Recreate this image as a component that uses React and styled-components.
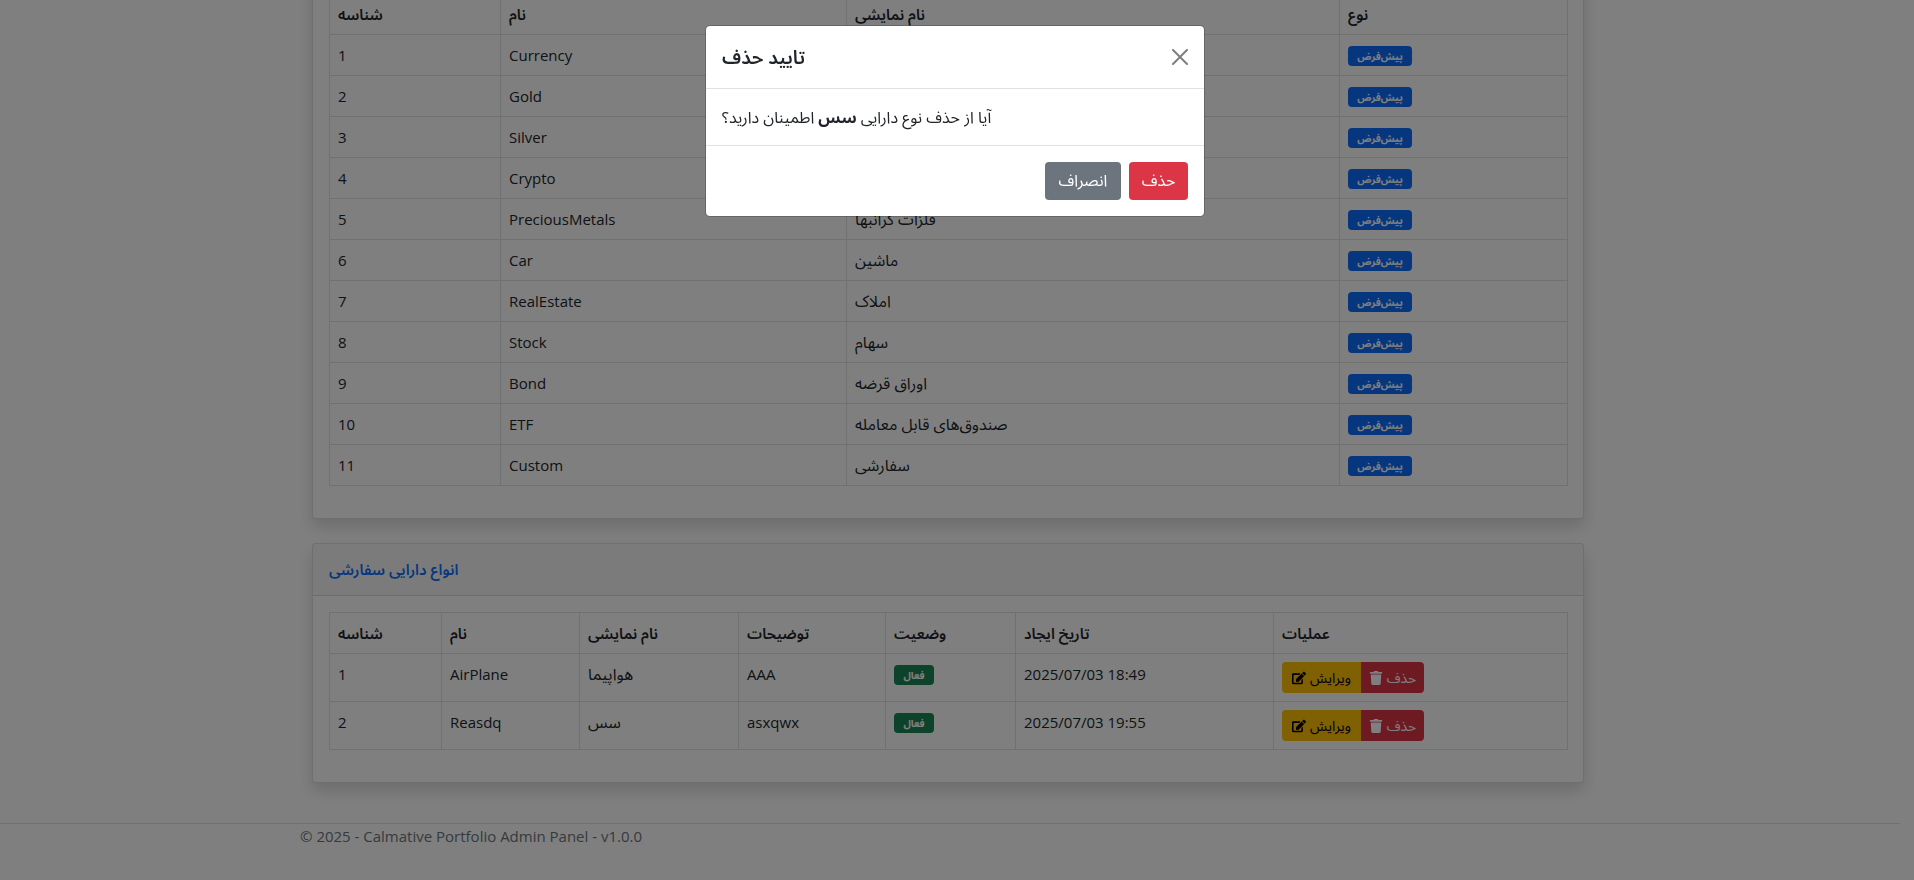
import React from "react";
import styled, { createGlobalStyle } from "styled-components";
import { FaEdit, FaTrash } from "react-icons/fa";

const GlobalStyle = createGlobalStyle`
  *, *::before, *::after { box-sizing: border-box; }
  body {
    margin: 0;
    overflow: hidden;
    background: #fff;
    color: #212529;
    font-family: "Open Sans", "Noto Sans Arabic", "DejaVu Sans", sans-serif;
    font-size: 15px;
    line-height: 24px;
  }
`;

const Fa = styled.span.attrs({ lang: "fa" })`
  font-size: ${({ $size }) => $size || 16}px;
  line-height: 16px;
`;

const Main = styled.main`
  margin-top: -24px;
  padding-right: 18px;
`;

const Container = styled.div`
  max-width: 1320px;
  margin: 0 auto;
  padding: 0 ${({ $gutter }) => $gutter}px;
`;

const Card = styled.section`
  margin-bottom: 24px;
  border: 1px solid rgba(0, 0, 0, 0.125);
  border-radius: 4px;
  background: #fff;
  box-shadow: 0 8px 16px rgba(0, 0, 0, 0.15);
`;

const CardHeader = styled.header`
  padding: 16px;
  border-bottom: 1px solid rgba(0, 0, 0, 0.125);
  background: rgba(0, 0, 0, 0.03);
`;

const CardTitle = styled.h6`
  margin: 0;
  color: #0d6efd;
  font-size: 15px;
  font-weight: 600;
  line-height: 19px;
`;

const CardBody = styled.div`
  padding: 16px 16px 32px;
`;

const Table = styled.table`
  width: 100%;
  table-layout: fixed;
  border-collapse: collapse;

  th, td {
    height: ${({ $row }) => $row}px;
    padding: 8px;
    border: 1px solid #dee2e6;
    text-align: left;
    vertical-align: top;
    line-height: 24px;
  }
  thead th { height: 41px; font-weight: 600; }
`;

const Col = styled.col`
  width: ${({ $w }) => $w}px;
`;

const Badge = styled.span`
  display: flex;
  align-items: center;
  justify-content: center;
  width: fit-content;
  min-width: ${({ $wide }) => ($wide ? 64 : 40)}px;
  height: 20px;
  margin-top: 3px;
  border-radius: 4px;
  background: ${({ $wide }) => ($wide ? "#0d6efd" : "#198754")};
  color: #fff;
  font-size: 10px;
  font-weight: 700;
  line-height: 12px;
`;

const ButtonGroup = styled.div`
  display: flex;
`;

const SmallButton = styled.button`
  display: flex;
  align-items: center;
  justify-content: center;
  gap: 4px;
  width: ${({ $danger }) => ($danger ? 63 : 79)}px;
  height: 31px;
  padding: 0;
  border: 0;
  border-radius: ${({ $danger }) => ($danger ? "0 4px 4px 0" : "4px 0 0 4px")};
  background: ${({ $danger }) => ($danger ? "#dc3545" : "#ffc107")};
  color: ${({ $danger }) => ($danger ? "#fff" : "#000")};
  font-family: inherit;
  font-size: 14px;
  line-height: 21px;
  white-space: nowrap;
`;

const Footer = styled.footer`
  margin: 40px 14px 0 0;
  padding: 0 4px 32px 0;
  border-top: 1px solid #dee2e6;
  color: #6c757d;
`;

const Backdrop = styled.div`
  position: fixed;
  inset: 0;
  padding: 25px 4px 0 0;
  background: rgba(0, 0, 0, 0.5);
`;

const Dialog = styled.div`
  max-width: 500px;
  margin: 0 auto;
  border: 1px solid rgba(0, 0, 0, 0.2);
  border-radius: 5px;
  background: #fff;
  background-clip: padding-box;
`;

const DialogHeader = styled.header`
  display: flex;
  align-items: center;
  justify-content: space-between;
  padding: 16px;
  border-bottom: 1px solid #dee2e6;
`;

const DialogTitle = styled.h5`
  margin: 0;
  font-size: 19px;
  font-weight: 600;
  line-height: 30px;
`;

const CloseButton = styled.button`
  display: flex;
  padding: 0;
  border: 0;
  background: none;
  color: #000;
  opacity: 0.5;
`;

const DialogBody = styled.div`
  padding: 16px;
`;

const Message = styled.p`
  margin: 0;
`;

const DialogFooter = styled.footer`
  display: flex;
  justify-content: flex-end;
  gap: 8px;
  padding: 16px;
  border-top: 1px solid #dee2e6;
`;

const DialogButton = styled.button`
  height: 38px;
  min-width: ${({ $danger }) => ($danger ? 59 : 76)}px;
  padding: 0 12px;
  border: 0;
  border-radius: 4px;
  background: ${({ $danger }) => ($danger ? "#dc3545" : "#6c757d")};
  color: #fff;
  font-family: inherit;
  font-size: 16px;
`;

const defaultTypes = [
  ["Currency", "ارز"],
  ["Gold", "طلا"],
  ["Silver", "نقره"],
  ["Crypto", "ارز دیجیتال"],
  ["PreciousMetals", "فلزات گرانبها"],
  ["Car", "ماشین"],
  ["RealEstate", "املاک"],
  ["Stock", "سهام"],
  ["Bond", "اوراق قرضه"],
  ["ETF", "صندوق‌های قابل معامله"],
  ["Custom", "سفارشی"],
];

const customTypes = [
  ["AirPlane", "هواپیما", "AAA", "2025/07/03 18:49"],
  ["Reasdq", "سس", "asxqwx", "2025/07/03 19:55"],
];

function TableHead({ labels }) {
  return (
    <thead>
      <tr>
        {labels.map((label) => (
          <th key={label} scope="col"><Fa $size={15}>{label}</Fa></th>
        ))}
      </tr>
    </thead>
  );
}

function Columns({ widths }) {
  return (
    <colgroup>
      {widths.map((w, i) => <Col key={i} $w={w} />)}
    </colgroup>
  );
}

export default function App() {
  return (
    <>
      <GlobalStyle />
      <Main>
        <Container $gutter={24}>
          <Card>
            <CardBody>
              <Table $row={41}>
                <Columns widths={[171, 346, 493, 228]} />
                <TableHead labels={["شناسه", "نام", "نام نمایشی", "نوع"]} />
                <tbody>
                  {defaultTypes.map(([name, title], i) => (
                    <tr key={name}>
                      <td>{i + 1}</td>
                      <td>{name}</td>
                      <td><Fa>{title}</Fa></td>
                      <td><Badge $wide>پیش‌فرض</Badge></td>
                    </tr>
                  ))}
                </tbody>
              </Table>
            </CardBody>
          </Card>
          <Card>
            <CardHeader>
              <CardTitle><Fa $size={15}>انواع دارایی سفارشی</Fa></CardTitle>
            </CardHeader>
            <CardBody>
              <Table $row={48}>
                <Columns widths={[112, 138, 159, 147, 130, 258, 294]} />
                <TableHead
                  labels={["شناسه", "نام", "نام نمایشی", "توضیحات", "وضعیت", "تاریخ ایجاد", "عملیات"]}
                />
                <tbody>
                  {customTypes.map(([name, title, note, date], i) => (
                    <tr key={name}>
                      <td>{i + 1}</td>
                      <td>{name}</td>
                      <td><Fa>{title}</Fa></td>
                      <td>{note}</td>
                      <td><Badge>فعال</Badge></td>
                      <td>{date}</td>
                      <td>
                        <ButtonGroup>
                          <SmallButton type="button"><FaEdit /><Fa $size={14}>ویرایش</Fa></SmallButton>
                          <SmallButton type="button" $danger><FaTrash /><Fa $size={14}>حذف</Fa></SmallButton>
                        </ButtonGroup>
                      </td>
                    </tr>
                  ))}
                </tbody>
              </Table>
            </CardBody>
          </Card>
        </Container>
      </Main>
      <Footer>
        <Container $gutter={12}>© 2025 - Calmative Portfolio Admin Panel - v1.0.0</Container>
      </Footer>
      <Backdrop>
        <Dialog role="dialog" aria-modal="true" aria-labelledby="dialog-title">
          <DialogHeader>
            <DialogTitle id="dialog-title">تایید حذف</DialogTitle>
            <CloseButton type="button" aria-label="Close">
              <svg width="16" height="16" viewBox="0 0 16 16" fill="currentColor">
                <path d="M.293.293a1 1 0 011.414 0L8 6.586 14.293.293a1 1 0 111.414 1.414L9.414 8l6.293 6.293a1 1 0 01-1.414 1.414L8 9.414l-6.293 6.293a1 1 0 01-1.414-1.414L6.586 8 .293 1.707a1 1 0 010-1.414z" />
              </svg>
            </CloseButton>
          </DialogHeader>
          <DialogBody>
            <Message><Fa>آیا از حذف نوع دارایی <strong>سس</strong> اطمینان دارید؟</Fa></Message>
          </DialogBody>
          <DialogFooter>
            <DialogButton type="button">انصراف</DialogButton>
            <DialogButton type="button" $danger>حذف</DialogButton>
          </DialogFooter>
        </Dialog>
      </Backdrop>
    </>
  );
}
